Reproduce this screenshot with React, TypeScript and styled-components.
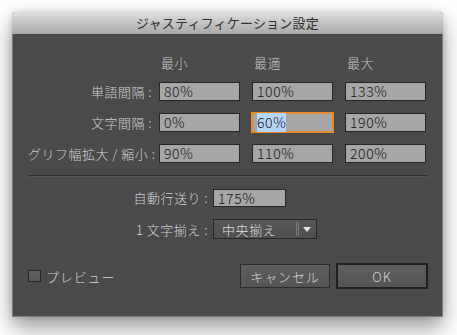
import styled, { createGlobalStyle } from "styled-components";

// 전역 스타일
const GlobalStyle = createGlobalStyle`
  html, body {
    margin: 0;
    background: #ffffff;
  }
  body {
    font-family: "Noto Sans CJK JP", "Noto Sans", sans-serif;
  }
`;

const rows = [
  { label: "単語間隔 :", values: ["80%", "100%", "133%"] },
  { label: "文字間隔 :", values: ["0%", "60%", "190%"], focus: 1 },
  { label: "グリフ幅拡大 / 縮小 :", values: ["90%", "110%", "200%"] },
];

/**
 * @desc 자스티피케이션 설정 다이얼로그입니다.
 */
function App(): JSX.Element {
  return (
    <Page>
      <GlobalStyle />
      <Dialog>
        {/** 타이틀 영역 */}
        <TitleBar>ジャスティフィケーション設定</TitleBar>

        <Body>
          {/** 최소 / 최적 / 최대 */}
          <HeaderRow>
            <LabelCell />
            <FieldGroup>
              <ColumnHead>最小</ColumnHead>
              <ColumnHead>最適</ColumnHead>
              <ColumnHead>最大</ColumnHead>
            </FieldGroup>
          </HeaderRow>

          {rows.map((row) => (
            <Row key={row.label}>
              <LabelCell>{row.label}</LabelCell>
              <FieldGroup>
                {row.values.map((v, i) => (
                  <Field key={i} $focused={row.focus === i}>
                    {row.focus === i ? <Selected>{v}</Selected> : v}
                  </Field>
                ))}
              </FieldGroup>
            </Row>
          ))}

          <Separator />

          <OptionRow>
            <OptionLabel>自動行送り :</OptionLabel>
            <SmallField>175%</SmallField>
          </OptionRow>

          <OptionRow>
            <OptionLabel>1 文字揃え :</OptionLabel>
            <Select>
              <SelectText>中央揃え</SelectText>
              <SelectDivider />
              <SelectArrow />
            </Select>
          </OptionRow>

          {/** 하단 버튼 영역 */}
          <Footer>
            <Preview>
              <CheckBox />
              プレビュー
            </Preview>
            <Buttons>
              <Button>キャンセル</Button>
              <Button $primary>OK</Button>
            </Buttons>
          </Footer>
        </Body>
      </Dialog>
    </Page>
  );
}

export default App;

const Page = styled.div`
  width: 457px;
  height: 335px;
  box-sizing: border-box;
  padding: 12px 0 0 12px;
  overflow: hidden;
`;

const Dialog = styled.div`
  width: 431px;
  height: 305px;
  box-sizing: border-box;
  background: #4a4a4a;
  border: 1px solid #7d7d7d;
  border-top: none;
  border-radius: 4px 4px 0 0;
  box-shadow: 0 10px 22px rgba(0, 0, 0, 0.42), 0 0 6px rgba(0, 0, 0, 0.12);
  display: flex;
  flex-direction: column;
`;

const TitleBar = styled.div`
  height: 22px;
  margin: 0 -1px;
  border-radius: 4px 4px 0 0;
  background: linear-gradient(#dedede, #a9a9a9);
  color: #2c2c2c;
  font-size: 13px;
  line-height: 22px;
  text-align: center;
  letter-spacing: 0.2px;
`;

const Body = styled.div`
  padding: 21px 14px 0 15px;
  display: flex;
  flex-direction: column;
  font-weight: 300;
`;

const Row = styled.div`
  display: flex;
  align-items: center;
  height: 19px;
  margin-bottom: 12px;
`;

const HeaderRow = styled(Row)`
  height: 15px;
  margin-bottom: 12px;
`;

const LabelCell = styled.div`
  width: 127px;
  margin-right: 4px;
  padding-right: 3px;
  box-sizing: border-box;
  text-align: right;
  color: #d2d2d2;
  font-size: 13px;
  letter-spacing: 0.5px;
  white-space: nowrap;
`;

const FieldGroup = styled.div`
  display: flex;
  gap: 12px;
`;

const ColumnHead = styled.div`
  width: 81px;
  padding-left: 2px;
  box-sizing: border-box;
  color: #c9c9c9;
  font-size: 13px;
  letter-spacing: 0.6px;
`;

const Field = styled.div<{ $focused?: boolean }>`
  width: 81px;
  height: 19px;
  box-sizing: border-box;
  background: #a6a6a6;
  border: 1px solid ${(p) => (p.$focused ? "#e8892a" : "#262626")};
  outline: ${(p) => (p.$focused ? "1px solid #e8892a" : "none")};
  padding-left: 4px;
  color: #151515;
  font-size: 14px;
  letter-spacing: 0.6px;
  line-height: 17px;
`;

const Selected = styled.span`
  background: #b5d5fb;
`;

const Separator = styled.div`
  height: 1px;
  background: #2e2e2e;
  box-shadow: 0 1px 0 #555555;
  margin: 0 0 12px;
`;

const OptionRow = styled.div`
  display: flex;
  align-items: center;
  margin-bottom: 12px;
`;

const OptionLabel = styled.div`
  width: 181px;
  margin-right: 4px;
  padding-right: 1px;
  box-sizing: border-box;
  text-align: right;
  color: #d2d2d2;
  font-size: 13px;
  letter-spacing: 0.5px;
  white-space: nowrap;
`;

const SmallField = styled(Field)`
  width: 73px;
  height: 18px;
  line-height: 16px;
`;

const Select = styled.div`
  width: 104px;
  height: 20px;
  box-sizing: border-box;
  border: 1px solid #262626;
  background: linear-gradient(#575757, #4f4f4f);
  display: flex;
  align-items: center;
`;

const SelectText = styled.div`
  flex: 1;
  padding-left: 8px;
  color: #dcdcdc;
  font-size: 13px;
  letter-spacing: 0.6px;
`;

const SelectDivider = styled.div`
  width: 1px;
  height: 14px;
  border-left: 1px solid #7a7a7a;
  border-right: 1px solid #7a7a7a;
  margin-right: 4px;
`;

const SelectArrow = styled.div`
  width: 0;
  height: 0;
  border-left: 4px solid transparent;
  border-right: 4px solid transparent;
  border-top: 5px solid #e6e6e6;
  margin-right: 5px;
`;

const Footer = styled.div`
  display: flex;
  align-items: center;
  justify-content: space-between;
  margin-top: 12px;
`;

const Preview = styled.div`
  display: flex;
  align-items: center;
  gap: 5px;
  color: #d2d2d2;
  font-size: 13px;
  letter-spacing: 0.9px;
`;

const CheckBox = styled.div`
  width: 13px;
  height: 12px;
  box-sizing: border-box;
  border: 1px solid #262626;
  background: linear-gradient(#606060, #565656);
`;

const Buttons = styled.div`
  display: flex;
  align-items: center;
  gap: 6px;
`;

const Button = styled.div<{ $primary?: boolean }>`
  width: ${(p) => (p.$primary ? "92px" : "90px")};
  height: ${(p) => (p.$primary ? "26px" : "24px")};
  box-sizing: border-box;
  border: ${(p) => (p.$primary ? "2px solid #1f1f1f" : "1px solid #2a2a2a")};
  background: linear-gradient(#5e5e5e, #545454);
  color: #d6d6d6;
  font-size: 13px;
  letter-spacing: 0.9px;
  display: flex;
  align-items: center;
  justify-content: center;
`;
